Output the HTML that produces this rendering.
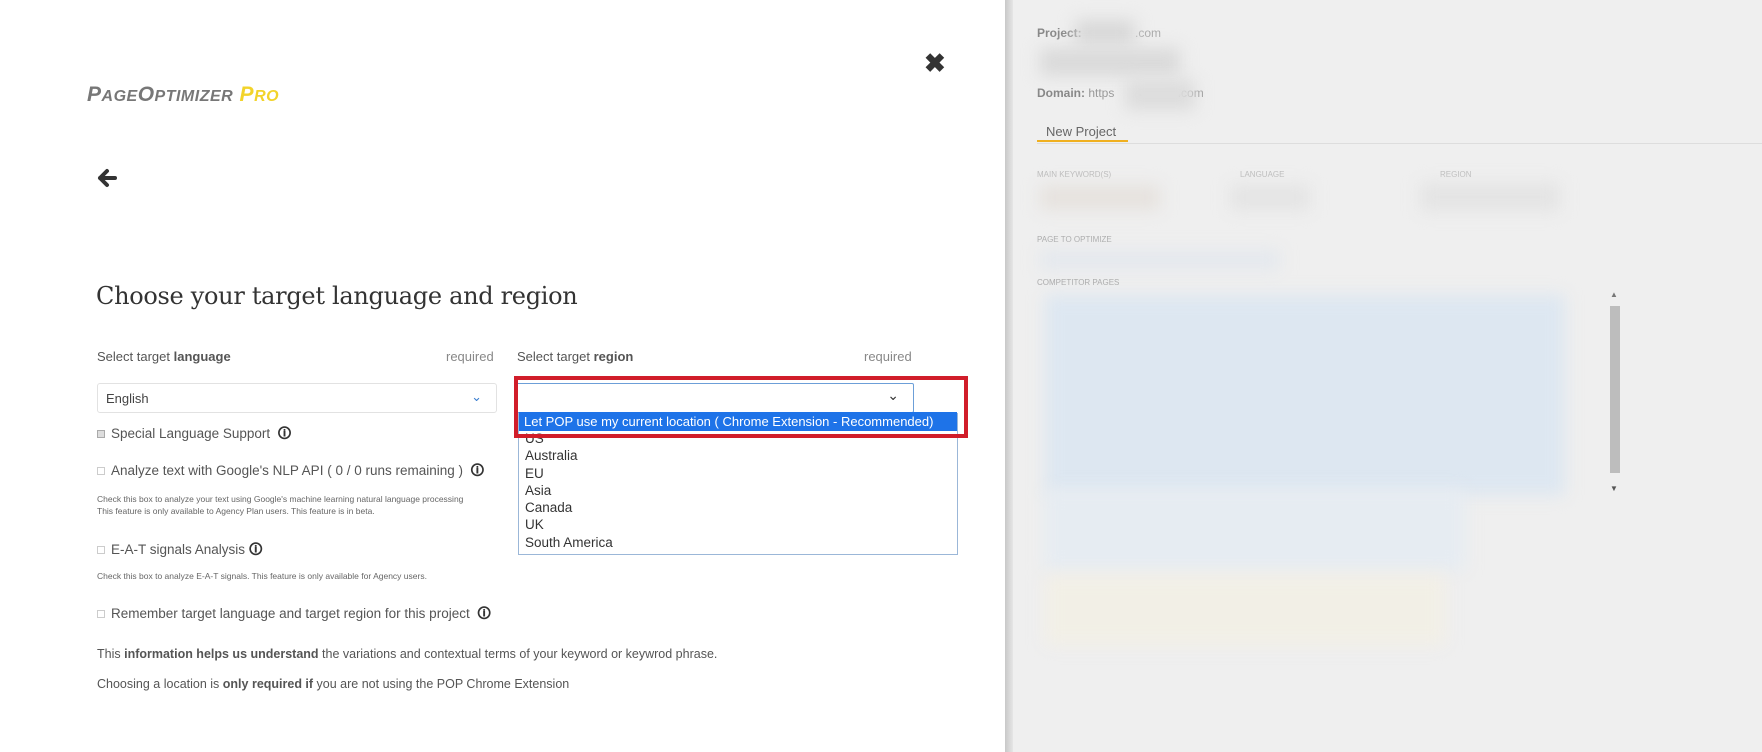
<!DOCTYPE html>
<html><head><meta charset="utf-8"><style>
*{margin:0;padding:0;box-sizing:border-box}
body{width:1762px;height:752px;position:relative;overflow:hidden;background:#fff;font-family:"Liberation Sans",sans-serif;color:#555}
.a{position:absolute;white-space:nowrap}
.blur{position:absolute;filter:blur(8px)}
</style></head><body>
<div class="a" style="left:87px;top:83px;font-size:21px;font-weight:bold;font-style:italic;color:#777;letter-spacing:0.5px">P<span style="font-size:16px">AGE</span>O<span style="font-size:16px">PTIMIZER</span> <span style="color:#f2d32a">P<span style="font-size:16px">RO</span></span></div>
<div class="a" style="left:924px;top:48px;font-size:26px;font-weight:bold;color:#333">✖</div>
<svg class="a" style="left:96px;top:168px" width="22" height="20" viewBox="0 0 22 20"><path d="M11 3 L4 10 L11 17 M4 10 H19" stroke="#333" stroke-width="4" fill="none" stroke-linecap="round" stroke-linejoin="round"/></svg>
<div class="a" style="left:96px;top:282px;font-size:24px;font-family:'DejaVu Serif',serif;color:#333;letter-spacing:-0.3px">Choose your target language and region</div>
<div class="a" style="left:97px;top:349px;font-size:13px;color:#555">Select target <b>language</b></div>
<div class="a" style="left:446px;top:349px;font-size:13px;color:#888">required</div>
<div class="a" style="left:517px;top:349px;font-size:13px;color:#555">Select target <b>region</b></div>
<div class="a" style="left:864px;top:349px;font-size:13px;color:#888">required</div>
<div class="a" style="left:97px;top:383px;width:400px;height:30px;border:1px solid #e2e2e2;border-radius:3px;font-size:13px;padding:7px 8px;color:#444">English<span style="position:absolute;right:14px;top:5px;color:#3b7fd0">⌄</span></div>
<div class="a" style="left:97px;top:424px;font-size:13.5px;color:#555"><span style="display:inline-block;width:8px;height:8px;border:1px solid #aaa;background:#ddd;margin-right:6px"></span>Special Language Support &nbsp;<b style="color:#333">🛈</b></div>
<div class="a" style="left:97px;top:461px;font-size:13.5px;color:#555"><span style="display:inline-block;width:8px;height:8px;border:1px solid #ccc;margin-right:6px"></span>Analyze text with Google's NLP API ( 0 / 0 runs remaining ) &nbsp;<b style="color:#333">🛈</b></div>
<div class="a" style="left:97px;top:493px;font-size:8.5px;color:#666;line-height:12px">Check this box to analyze your text using Google's machine learning natural language processing<br>This feature is only available to Agency Plan users. This feature is in beta.</div>
<div class="a" style="left:516px;top:383px;width:398px;height:30px;border:1px solid #6c9fd8;border-radius:2px;background:#fff"><span style="position:absolute;right:14px;top:3px;color:#333;font-size:14px">⌄</span></div>
<div class="a" style="left:518px;top:413px;width:440px;height:142px;border:1px solid #9bb7d8;background:#fff;font-size:13.5px;color:#333;line-height:17.3px;padding:16px 0 0 6px">US<br>Australia<br>EU<br>Asia<br>Canada<br>UK<br>South America</div>
<div class="a" style="left:519px;top:412px;width:438px;height:19px;background:#1e73e8;color:#fff;font-size:13px;padding:2px 5px">Let POP use my current location ( Chrome Extension - Recommended)</div>
<div class="a" style="left:514px;top:376px;width:454px;height:62px;border:4px solid #d11d2a"></div>
<div class="a" style="left:97px;top:540px;font-size:13.5px;color:#555"><span style="display:inline-block;width:8px;height:8px;border:1px solid #ccc;margin-right:6px"></span>E-A-T signals Analysis <b style="color:#333">🛈</b></div>
<div class="a" style="left:97px;top:571px;font-size:8.5px;color:#666">Check this box to analyze E-A-T signals. This feature is only available for Agency users.</div>
<div class="a" style="left:97px;top:604px;font-size:13.5px;color:#555"><span style="display:inline-block;width:8px;height:8px;border:1px solid #ccc;margin-right:6px"></span>Remember target language and target region for this project &nbsp;<b style="color:#333">🛈</b></div>
<div class="a" style="left:97px;top:647px;font-size:12.5px;color:#555">This <b>information helps us understand</b> the variations and contextual terms of your keyword or keywrod phrase.</div>
<div class="a" style="left:97px;top:677px;font-size:12.5px;color:#555">Choosing a location is <b>only required if</b> you are not using the POP Chrome Extension</div>
<div class="a" style="left:1005px;top:0;width:757px;height:752px;background:#efefef"></div>
<div class="a" style="left:1005px;top:0;width:8px;height:752px;background:linear-gradient(90deg,#c8c8c8,#e6e6e6)"></div>
<div class="a" style="left:1037px;top:26px;font-size:12px;color:#888"><b>Project:</b> <span style="color:#aaa;margin-left:50px">.com</span></div>
<div class="blur" style="left:1075px;top:20px;width:60px;height:25px;background:#d8d8d8"></div>
<div class="blur" style="left:1040px;top:48px;width:140px;height:28px;background:#dadada"></div>
<div class="a" style="left:1037px;top:86px;font-size:12px;color:#999"><b style="color:#888">Domain:</b> https <span style="margin-left:60px">.com</span></div>
<div class="blur" style="left:1125px;top:80px;width:70px;height:30px;background:#dcdcdc"></div>
<div class="a" style="left:1046px;top:124px;font-size:13px;color:#666">New Project</div>
<div class="a" style="left:1037px;top:140px;width:91px;height:2px;background:#f0b020"></div>
<div class="a" style="left:1037px;top:143px;width:725px;height:1px;background:#ddd"></div>
<div class="a" style="left:1037px;top:170px;font-size:8px;color:#bbb">MAIN KEYWORD(S)</div>
<div class="a" style="left:1240px;top:170px;font-size:8px;color:#bbb">LANGUAGE</div>
<div class="a" style="left:1440px;top:170px;font-size:8px;color:#bbb">REGION</div>
<div class="blur" style="left:1040px;top:185px;width:120px;height:25px;background:#e6e2de"></div>
<div class="blur" style="left:1230px;top:185px;width:80px;height:25px;background:#e4e4e4"></div>
<div class="blur" style="left:1420px;top:183px;width:140px;height:28px;background:#e4e4e4"></div>
<div class="a" style="left:1037px;top:235px;font-size:8px;color:#aaa">PAGE TO OPTIMIZE</div>
<div class="blur" style="left:1040px;top:250px;width:240px;height:20px;background:#e4e8ee"></div>
<div class="a" style="left:1037px;top:278px;font-size:8px;color:#aaa">COMPETITOR PAGES</div>
<div class="blur" style="left:1045px;top:295px;width:520px;height:200px;background:#dde7f1"></div>
<div class="blur" style="left:1045px;top:490px;width:420px;height:80px;background:#e6ecf2"></div>
<div class="blur" style="left:1045px;top:575px;width:400px;height:70px;background:#f2efe6"></div>
<div class="a" style="left:1610px;top:306px;width:10px;height:167px;background:#bdbdbd"></div>
<div class="a" style="left:1610px;top:290px;font-size:8px;color:#777">▲</div>
<div class="a" style="left:1610px;top:484px;font-size:8px;color:#555">▼</div>
</body></html>
